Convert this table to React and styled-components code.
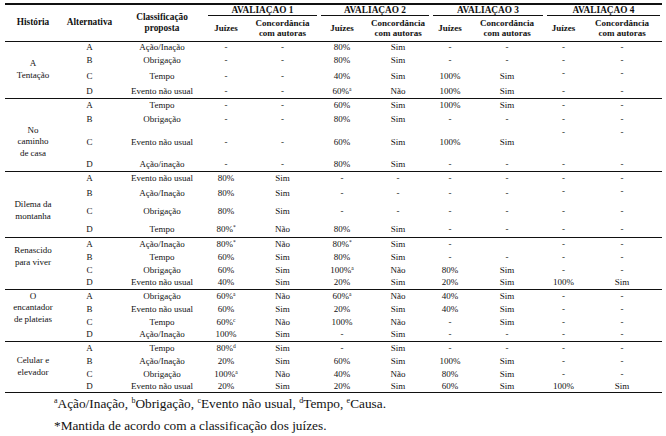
import React from 'react';
import styled, { createGlobalStyle } from 'styled-components';

const GlobalStyle = createGlobalStyle`
  html, body {
    margin: 0;
    padding: 0;
    background: #ffffff;
  }
  body {
    font-family: "Liberation Serif", "Times New Roman", serif;
    color: #111111;
  }
`;

const Page = styled.div`
  width: 666px;
  height: 436px;
  box-sizing: border-box;
  padding: 3px 4px 0 5px;
  overflow: hidden;
  font-family: "Liberation Serif", "Times New Roman", serif;
`;

const Table = styled.table`
  width: 657px;
  border-collapse: collapse;
  table-layout: fixed;
  border-top: 2px solid #111;
  border-bottom: 1px solid #111;
  font-family: inherit;
  font-size: 9px;
  color: #111;
`;

const Col = styled.col`
  width: ${p => p.$w}px;
`;

const Head = styled.thead`
  border-bottom: 1px solid #111;
`;

const Row = styled.tr`
  height: ${p => p.$h}px;
`;

const HeadCell = styled.th`
  padding: 0;
  font-size: 9.3px;
  font-weight: bold;
  line-height: 11px;
  text-align: center;
  vertical-align: middle;
`;

const GroupHead = styled.th`
  padding: 0;
  vertical-align: bottom;
`;

const GroupLabel = styled.div`
  margin: 0 2px;
  border-bottom: 1px solid #111;
  font-size: 9.3px;
  font-weight: bold;
  line-height: 10px;
  text-align: center;
`;

const SubHead = styled.th`
  padding: 0;
  font-size: 9px;
  font-weight: bold;
  line-height: 10px;
  text-align: center;
  vertical-align: middle;
`;

const Group = styled.tbody`
  border-top: 1px solid #111;
`;

const Story = styled.td`
  padding: ${p => p.$pt || 0}px 0 ${p => p.$pb || 0}px;
  line-height: 11.5px;
  text-align: center;
  vertical-align: middle;
`;

const Cell = styled.td`
  padding: ${p => (p.$top ? '1px 0 0' : '0')};
  line-height: 10px;
  text-align: center;
  vertical-align: ${p => (p.$top ? 'top' : 'middle')};
  white-space: nowrap;
`;

const Mark = styled.sup`
  font-size: 5.5px;
  line-height: 0;
  vertical-align: 3px;
`;

const Notes = styled.div`
  padding-left: 49px;
  font-size: 13.3px;
  line-height: 22px;
  color: #111;
`;

const NoteMark = styled.sup`
  font-size: 8px;
  line-height: 0;
  vertical-align: 5px;
`;

const widths = [56, 57, 88, 40, 73, 46, 66, 38, 76, 37, 80];

const groups = [
  {
    story: ['A', 'Tentação'],
    heights: [11, 15, 17, 14],
    rows: [
      ['A', 'Ação/Inação', '-', '-', '80%', 'Sim', '-', '-', '-', '-'],
      ['B', 'Obrigação', '-', '-', '80%', 'Sim', '-', '-', '-', '-'],
      ['C', 'Tempo', '-', '-', '40%', 'Sim', '100%', 'Sim', '-', '-'],
      ['D', 'Evento não usual', '-', '-', '60%^a', 'Não', '100%', 'Sim', '-', '-'],
    ],
    top: [false, false, true, false],
  },
  {
    story: ['No', 'caminho', 'de casa'],
    pt: 15,
    heights: [14, 14, 32, 13],
    rows: [
      ['A', 'Tempo', '-', '-', '60%', 'Sim', '100%', 'Sim', '-', '-'],
      ['B', 'Obrigação', '-', '-', '80%', 'Sim', '-', '-', '-', '-'],
      ['C', 'Evento não usual', '-', '-', '60%', 'Sim', '100%', 'Sim', '-', '-'],
      ['D', 'Ação/inação', '-', '-', '80%', 'Sim', '-', '-', '-', '-'],
    ],
    top: [false, false, true, false],
  },
  {
    story: ['Dilema da', 'montanha'],
    pt: 13,
    heights: [14, 15, 22, 15],
    rows: [
      ['A', 'Evento não usual', '80%', 'Sim', '-', '-', '-', '-', '-', '-'],
      ['B', 'Ação/Inação', '80%', 'Sim', '-', '-', '-', '-', '-', '-'],
      ['C', 'Obrigação', '80%', 'Sim', '-', '-', '-', '-', '-', '-'],
      ['D', 'Tempo', '80%^*', 'Não', '80%', 'Sim', '-', '-', '-', '-'],
    ],
    top: [false, true, false, false],
  },
  {
    story: ['Renascido', 'para viver'],
    pb: 13,
    heights: [13, 13, 13, 13],
    rows: [
      ['A', 'Ação/Inação', '80%^*', 'Não', '80%^*', 'Sim', '-', '', '-', '-'],
      ['B', 'Tempo', '60%', 'Sim', '80%', 'Sim', '-', '-', '-', '-'],
      ['C', 'Obrigação', '60%', 'Sim', '100%^a', 'Não', '80%', 'Sim', '-', '-'],
      ['D', 'Evento não usual', '40%', 'Sim', '20%', 'Sim', '20%', 'Sim', '100%', 'Sim'],
    ],
    top: [false, false, false, false],
  },
  {
    story: ['O', 'encantador', 'de plateias'],
    pb: 14,
    heights: [13, 13, 13, 13],
    rows: [
      ['A', 'Obrigação', '60%^a', 'Não', '60%^a', 'Não', '40%', 'Sim', '-', '-'],
      ['B', 'Evento não usual', '60%', 'Sim', '20%', 'Sim', '40%', 'Sim', '-', '-'],
      ['C', 'Tempo', '60%^c', 'Não', '100%', 'Não', '-', 'Sim', '-', '-'],
      ['D', 'Ação/Inação', '100%', 'Sim', '-', 'Sim', '-', '-', '-', '-'],
    ],
    top: [false, false, false, false],
  },
  {
    story: ['Celular e', 'elevador'],
    heights: [13, 13, 13, 12],
    rows: [
      ['A', 'Tempo', '80%^d', 'Sim', '-', 'Sim', '-', '-', '-', '-'],
      ['B', 'Ação/Inação', '20%', 'Sim', '60%', 'Sim', '100%', 'Sim', '-', '-'],
      ['C', 'Obrigação', '100%^a', 'Não', '40%', 'Não', '80%', 'Sim', '-', '-'],
      ['D', 'Evento não usual', '20%', 'Sim', '20%', 'Sim', '60%', 'Sim', '100%', 'Sim'],
    ],
    top: [false, false, false, false],
  },
];

const Value = ({ text }) => {
  const [base, mark] = text.split('^');
  return (
    <>
      {base}
      {mark && <Mark>{mark}</Mark>}
    </>
  );
};

const App = () => {
  return (
    <Page>
      <GlobalStyle />
      <Table>
        <colgroup>
          {widths.map((w, i) => <Col key={i} $w={w} />)}
        </colgroup>
        <Head>
          <Row $h={11}>
            <HeadCell rowSpan={2}>História</HeadCell>
            <HeadCell rowSpan={2}>Alternativa</HeadCell>
            <HeadCell rowSpan={2}>Classificação<br />proposta</HeadCell>
            {[1, 2, 3, 4].map(n => (
              <GroupHead key={n} colSpan={2}>
                <GroupLabel>AVALIAÇÃO {n}</GroupLabel>
              </GroupHead>
            ))}
          </Row>
          <Row $h={25}>
            {[1, 2, 3, 4].map(n => (
              <React.Fragment key={n}>
                <SubHead>Juízes</SubHead>
                <SubHead>Concordância<br />com autoras</SubHead>
              </React.Fragment>
            ))}
          </Row>
        </Head>
        {groups.map((g, gi) => (
          <Group key={gi}>
            {g.rows.map((r, ri) => (
              <Row key={ri} $h={g.heights[ri]}>
                {ri === 0 && (
                  <Story rowSpan={4} $pt={g.pt} $pb={g.pb}>
                    {g.story.map((line, li) => (
                      <React.Fragment key={li}>
                        {li > 0 && <br />}
                        {line}
                      </React.Fragment>
                    ))}
                  </Story>
                )}
                {r.map((v, ci) => (
                  <Cell key={ci} $top={g.top[ri] && ci >= 8}>
                    <Value text={v} />
                  </Cell>
                ))}
              </Row>
            ))}
          </Group>
        ))}
      </Table>
      <Notes>
        <div>
          <NoteMark>a</NoteMark>Ação/Inação, <NoteMark>b</NoteMark>Obrigação,{' '}
          <NoteMark>c</NoteMark>Evento não usual, <NoteMark>d</NoteMark>Tempo,{' '}
          <NoteMark>e</NoteMark>Causa.
        </div>
        <div>*Mantida de acordo com a classificação dos juízes.</div>
      </Notes>
    </Page>
  );
};

export default App;
